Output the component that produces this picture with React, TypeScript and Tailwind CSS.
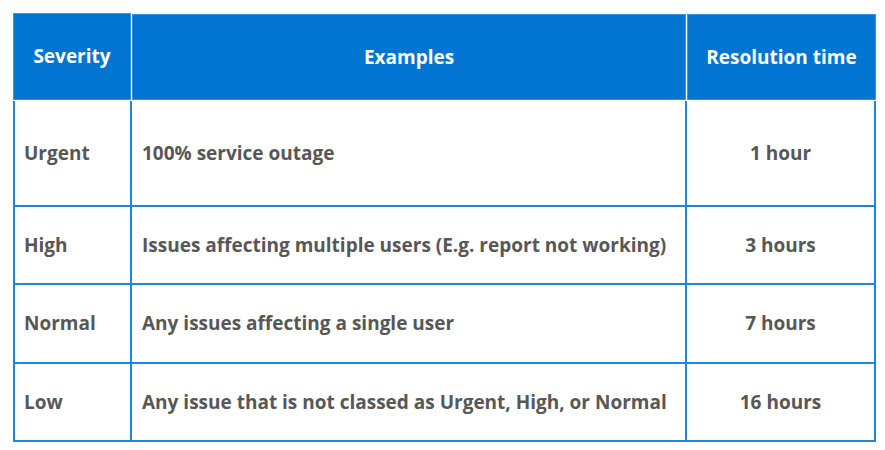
import React from "react";

const rows = [
  { sev: "Urgent", ex: "100% service outage", time: "1 hour", h: "h-[106px]" },
  { sev: "High", ex: "Issues affecting multiple users (E.g. report not working)", time: "3 hours", h: "h-[78px]" },
  { sev: "Normal", ex: "Any issues affecting a single user", time: "7 hours", h: "h-[79px]" },
  { sev: "Low", ex: "Any issue that is not classed as Urgent, High, or Normal", time: "16 hours", h: "h-[76px]" },
];

export default function App() {
  return (
    <div className="w-[885px] h-[450px] bg-white pl-[13px] pt-[13px]" style={{ fontFamily: "'Open Sans', Lato, sans-serif" }}>
      <div className="w-[863px]">
        <div className="flex gap-[1px] h-[87px] text-white font-bold text-[19px]">
          <div className="w-[118px] bg-[#0275d3] border border-[#3c91dc] flex items-center justify-center">Severity</div>
          <div className="w-[554px] bg-[#0275d3] border border-[#3c91dc] flex items-center justify-center mt-[1px]">Examples</div>
          <div className="w-[189px] bg-[#0275d3] border border-[#3c91dc] flex items-center justify-center mt-[1px]">Resolution time</div>
        </div>
        <div className="mt-[1px] border-l-2 border-r-2 border-b-2 border-[#1f86e0] text-[#575757] font-bold text-[19px]">
          {rows.map((r, i) => (
            <div key={r.sev} className={`grid grid-cols-[117px_555px_1fr] ${r.h} ${i < rows.length - 1 ? "border-b-2 border-[#1f86e0]" : ""}`}>
              <div className="border-r-2 border-[#1f86e0] flex items-center pl-[9px]">{r.sev}</div>
              <div className="border-r-2 border-[#1f86e0] flex items-center pl-[10px]">{r.ex}</div>
              <div className="flex items-center justify-center">{r.time}</div>
            </div>
          ))}
        </div>
      </div>
    </div>
  );
}
